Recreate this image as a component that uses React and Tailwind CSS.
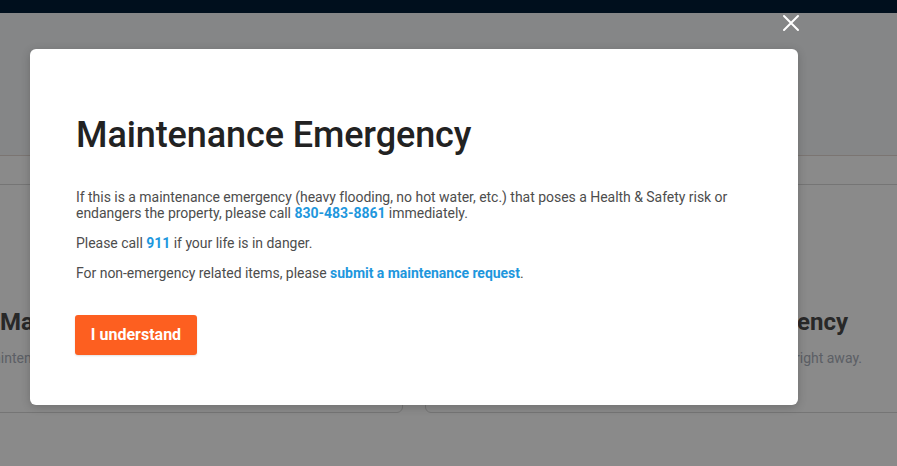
import React from "react";

export default function App() {
  return (
    <div className="relative h-[466px] w-[897px] overflow-hidden bg-white" style={{ fontFamily: "Roboto, 'Liberation Sans', sans-serif" }}>
      {/* Underlying page */}
      <div className="h-[13px] bg-[#011c36]" />
      <div className="h-[143px] border-b border-[#e3d9d2] bg-[#f6f7f9]" />
      <div className="relative h-[310px] bg-white">
        <div className="flex gap-[22px] pt-[28px] ml-[-60px]">
          <div className="w-[463px] h-[229px] shrink-0 rounded-b-md border border-[#d8d8d8] bg-white pl-[60px] pt-[122px]">
            <div className="text-[24px] font-bold text-[#4a4a4a] leading-[30px] -ml-[1px]">Maintenance Request</div>
            <div className="mt-[11px] text-[14px] text-[#aab0bb] -ml-[20px]">Maintenance requests are handled promptly.</div>
          </div>
          <div className="w-[520px] h-[229px] shrink-0 rounded-b-md border border-[#d8d8d8] bg-white pt-[122px]">
            <div className="w-[422px] text-right text-[24px] font-bold text-[#4a4a4a] leading-[30px]">Report an Emergency</div>
            <div className="mt-[11px] w-[436px] text-right text-[14px] text-[#aab0bb]">Call our emergency line right away.</div>
          </div>
        </div>
      </div>

      {/* Overlay */}
      <div className="absolute inset-0 bg-black/[0.46]" />

      {/* Close button */}
      <button className="absolute left-[782px] top-[14px] h-[18px] w-[18px] text-white">
        <svg viewBox="0 0 18 18" width="18" height="18" fill="none" stroke="currentColor" strokeWidth="2" strokeLinecap="round">
          <path d="M2 2 L16 16 M16 2 L2 16" />
        </svg>
      </button>

      {/* Modal */}
      <div className="absolute left-[30px] top-[49px] w-[768px] h-[356px] rounded-md bg-white shadow-[0_2px_10px_rgba(0,0,0,0.2)] pl-[46px] pr-[30px] pt-[65px]">
        <h1 className="text-[36px] leading-[42px] font-medium text-[#222222] tracking-[-0.1px]">Maintenance Emergency</h1>
        <div className="mt-[33px] text-[14px] leading-[16px] tracking-[-0.03px] text-[#4d4d4d]">
          <p className="w-[680px]">
            If this is a maintenance emergency (heavy flooding, no hot water, etc.) that poses a Health &amp; Safety risk or endangers the property, please call{" "}
            <span className="font-bold text-[#1e97dd]">830-483-8861</span> immediately.
          </p>
          <p className="mt-[14px]">
            Please call <span className="font-bold text-[#1e97dd]">911</span> if your life is in danger.
          </p>
          <p className="mt-[14px]">
            For non-emergency related items, please{" "}
            <span className="font-bold text-[#1e97dd]">submit a maintenance request</span>.
          </p>
        </div>
        <button className="mt-[34px] h-[40px] w-[122px] -ml-[1px] rounded-[3px] bg-[#fd5f20] text-[16px] font-bold text-white shadow-[0_1px_2px_rgba(0,0,0,0.12)]">
          I understand
        </button>
      </div>
    </div>
  );
}
